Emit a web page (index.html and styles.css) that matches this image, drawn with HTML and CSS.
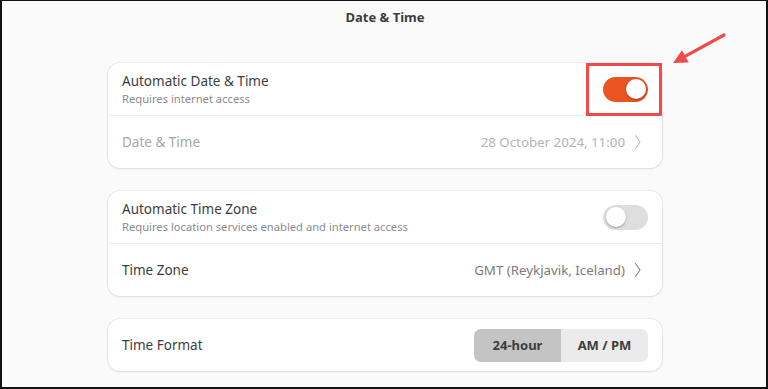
FILE: index.html
```html
<!DOCTYPE html>
<html>
<head>
<meta charset="utf-8">
<link rel="stylesheet" href="styles.css">
</head>
<body>
<div class="frame">
  <div class="header">Date &amp; Time</div>
  <div class="content">
    <div class="card">
      <div class="row tall">
        <div class="labels">
          <div class="title">Automatic Date &amp; Time</div>
          <div class="subtitle">Requires internet access</div>
        </div>
        <div class="switch-wrap">
          <div class="switch on"><span class="knob"></span></div>
          <span class="highlight"></span>
        </div>
      </div>
      <div class="row disabled">
        <div class="title">Date &amp; Time</div>
        <div class="value">28 October 2024, 11:00<span class="chev"><svg width="8" height="16" viewBox="0 0 8 16"><path d="M1.5 1.5 L6 8 L1.5 14.5" fill="none" stroke="currentColor" stroke-width="1.1" stroke-linecap="round" stroke-linejoin="round"/></svg></span></div>
      </div>
    </div>
    <div class="card">
      <div class="row tall">
        <div class="labels">
          <div class="title">Automatic Time Zone</div>
          <div class="subtitle">Requires location services enabled and internet access</div>
        </div>
        <div class="switch-wrap">
          <div class="switch"><span class="knob"></span></div>
        </div>
      </div>
      <div class="row">
        <div class="title">Time Zone</div>
        <div class="value">GMT (Reykjavik, Iceland)<span class="chev"><svg width="8" height="16" viewBox="0 0 8 16"><path d="M1.5 1.5 L6 8 L1.5 14.5" fill="none" stroke="currentColor" stroke-width="1.1" stroke-linecap="round" stroke-linejoin="round"/></svg></span></div>
      </div>
    </div>
    <div class="card">
      <div class="row">
        <div class="title">Time Format</div>
        <div class="segmented">
          <span class="seg active">24-hour</span>
          <span class="seg">AM / PM</span>
        </div>
      </div>
    </div>
  </div>
  <svg class="arrow" width="70" height="50" viewBox="0 0 70 50">
    <line x1="62" y1="14" x2="23" y2="35.3" stroke="#f24a4a" stroke-width="3.2" stroke-linecap="round"/>
    <polygon points="11,42 19.9,29.2 26.7,41.4" fill="#f24a4a"/>
  </svg>
</div>
</body>
</html>
```

FILE: styles.css
```css
html, body {
  margin: 0;
  padding: 0;
  background: #ffffff;
}
.frame {
  position: relative;
  box-sizing: border-box;
  width: 768px;
  height: 389px;
  overflow: hidden;
  background: #fafafa;
  border-left: 2px solid #111;
  border-right: 2px solid #111;
  border-bottom: 2px solid #111;
  border-top: 1px solid #111;
  font-family: "Noto Sans", "DejaVu Sans", sans-serif;
  color: #3d3d3d;
}
.header {
  height: 34px;
  padding-top: 7px;
  box-sizing: border-box;
  text-align: center;
  font-weight: bold;
  font-size: 13px;
  line-height: 18px;
  color: #3d3d3d;
  padding-left: 2px;
}
.content {
  width: 554px;
  margin: 28px auto 0 auto;
  display: flex;
  flex-direction: column;
  gap: 23px;
  position: relative;
  left: 1px;
}
.card {
  background: #ffffff;
  border-radius: 12px;
  box-shadow: 0 0 0 1px rgba(0,0,0,0.05), 0 1px 3px rgba(0,0,0,0.08);
}
.row {
  height: 52px;
  display: flex;
  align-items: center;
  justify-content: space-between;
  padding: 0 14px;
}
.row + .row {
  border-top: 1px solid #ececec;
}
.labels {
  display: flex;
  flex-direction: column;
  gap: 1px;
}
.title {
  font-size: 13.5px;
  line-height: 18px;
  color: #3d3d3d;
}
.subtitle {
  font-size: 11.2px;
  line-height: 15px;
  color: #8c8c8c;
}
.disabled .title {
  color: #a6a6a6;
}
.value {
  display: flex;
  align-items: center;
  font-size: 13.3px;
  color: #7c7c7c;
}
.disabled .value {
  color: #b4b4b4;
}
.chev {
  display: inline-flex;
  margin-left: 9px;
  margin-right: 6px;
  color: #888;
}
.disabled .chev {
  color: #b8b8b8;
}
.switch-wrap {
  position: relative;
  width: 45px;
  height: 25px;
}
.switch {
  width: 45px;
  height: 25px;
  border-radius: 13px;
  background: #dedede;
  position: relative;
  box-sizing: border-box;
}
.switch .knob {
  position: absolute;
  top: 2.5px;
  left: 2.5px;
  width: 20px;
  height: 20px;
  border-radius: 50%;
  background: #ffffff;
  box-shadow: 0 1px 2px rgba(0,0,0,0.3);
}
.switch.on {
  background: #e95420;
}
.switch.on .knob {
  left: 22.5px;
}
.highlight {
  position: absolute;
  left: -17px;
  top: -14px;
  width: 76px;
  height: 53px;
  box-sizing: border-box;
  border: 3px solid #f24a4a;
}
.segmented {
  display: flex;
  height: 33px;
  border-radius: 7px;
  overflow: hidden;
  background: #ebebeb;
}
.seg {
  display: flex;
  align-items: center;
  justify-content: center;
  width: 87px;
  font-size: 13px;
  font-weight: bold;
  color: #3d3d3d;
}
.seg.active {
  background: #c4c4c4;
}
.arrow {
  position: absolute;
  left: 660px;
  top: 20px;
}
```
